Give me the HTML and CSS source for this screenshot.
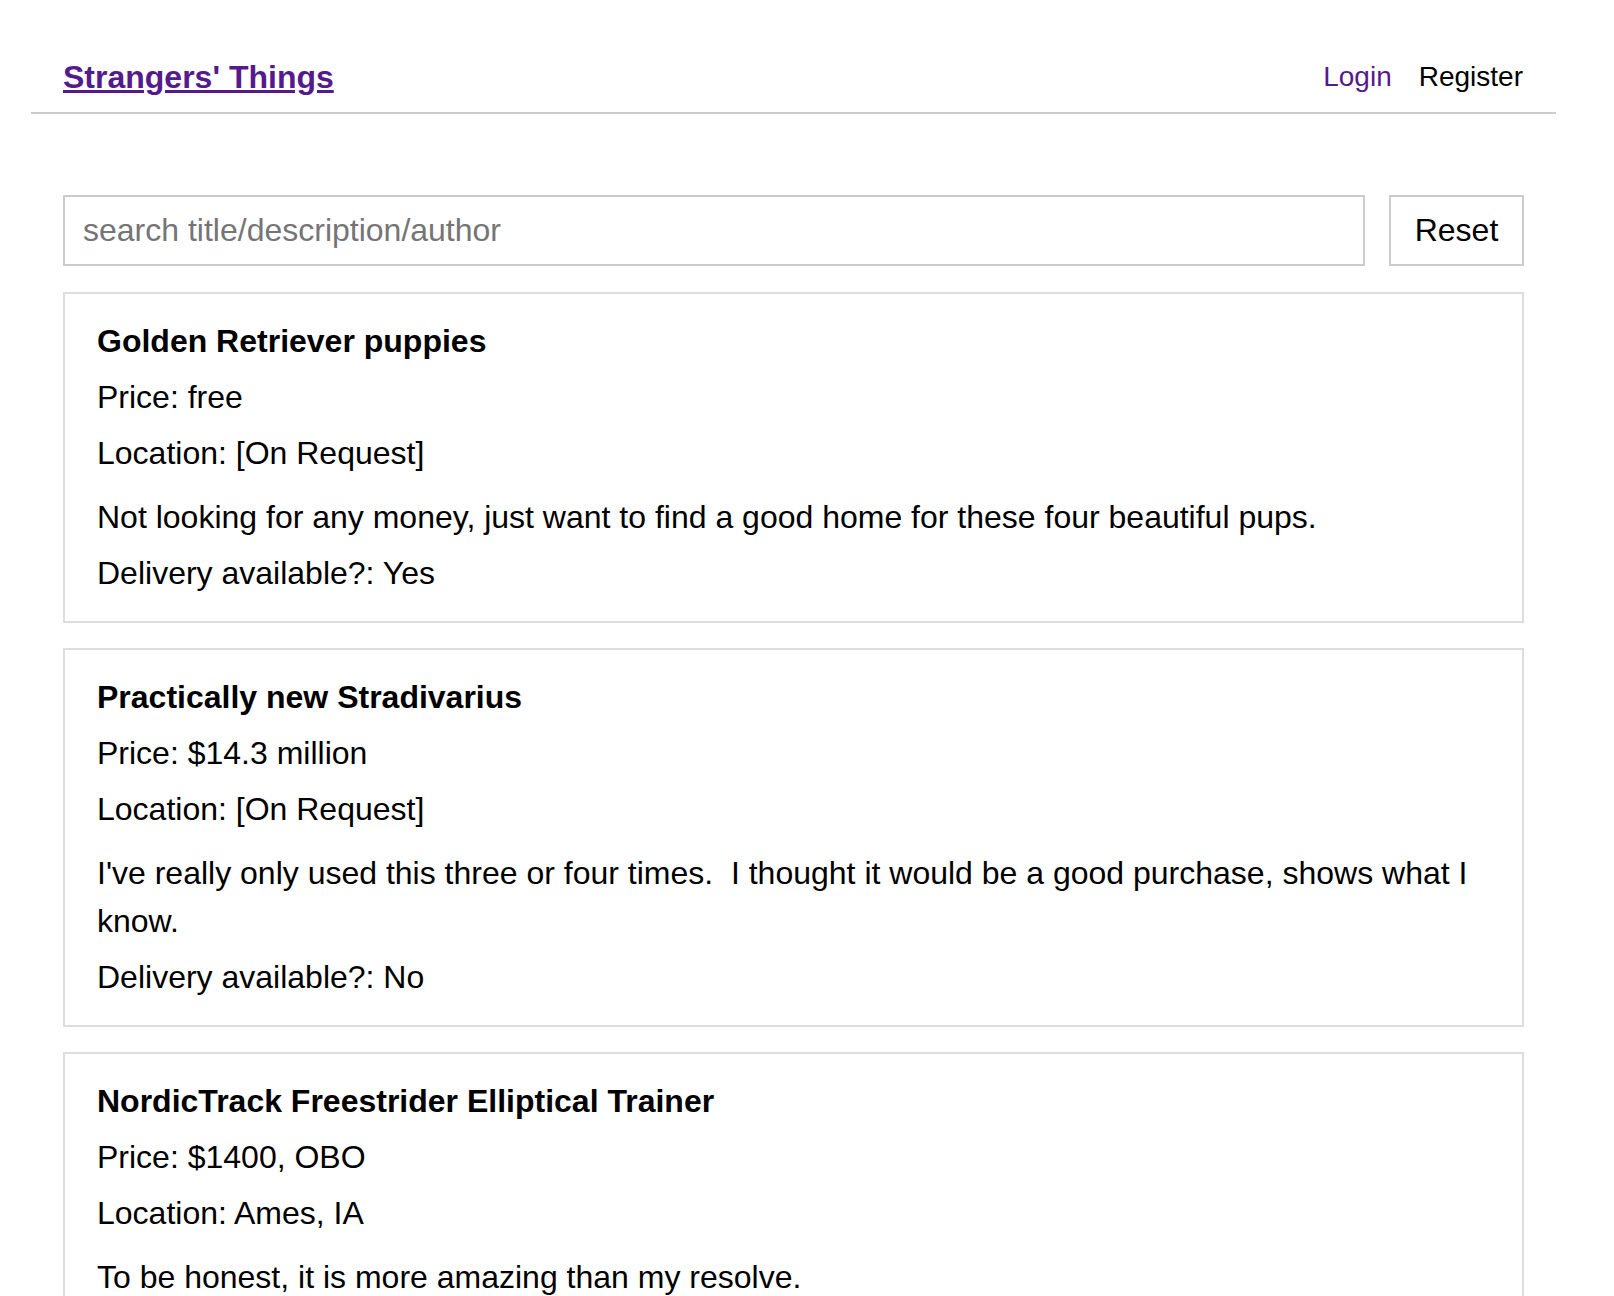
FILE: index.html
```html
<!DOCTYPE html>
<html lang="en">
<head>
<meta charset="utf-8">
<title>Strangers' Things</title>
<link rel="stylesheet" href="styles.css">
</head>
<body>
<header class="site-header">
  <a class="brand" href="#">Strangers' Things</a>
  <nav class="nav">
    <a class="nav-link nav-link--visited" href="#">Login</a>
    <a class="nav-link" href="#">Register</a>
  </nav>
</header>
<main class="main">
  <form class="search">
    <input class="search-input" type="text" placeholder="search title/description/author">
    <button class="reset" type="button">Reset</button>
  </form>
  <section class="posts">
    <article class="post">
      <div class="post-title">Golden Retriever puppies</div>
      <div class="post-line">Price: free</div>
      <div class="post-line">Location: [On Request]</div>
      <p class="post-desc">Not looking for any money, just want to find a good home for these four beautiful pups.</p>
      <div class="post-line">Delivery available?: Yes</div>
    </article>
    <article class="post">
      <div class="post-title">Practically new Stradivarius</div>
      <div class="post-line">Price: $14.3 million</div>
      <div class="post-line">Location: [On Request]</div>
      <p class="post-desc">I've really only used this three or four times.&nbsp; I thought it would be a good purchase, shows what I know.</p>
      <div class="post-line">Delivery available?: No</div>
    </article>
    <article class="post">
      <div class="post-title">NordicTrack Freestrider Elliptical Trainer</div>
      <div class="post-line">Price: $1400, OBO</div>
      <div class="post-line">Location: Ames, IA</div>
      <p class="post-desc">To be honest, it is more amazing than my resolve.</p>
      <div class="post-line">Delivery available?: No</div>
    </article>
  </section>
</main>
</body>
</html>
```

FILE: styles.css
```css
html, body {
  background: #fff;
}

body {
  margin: 0;
  font-family: "Liberation Sans", Arial, Helvetica, sans-serif;
  font-size: 32px;
  color: #000;
}

.site-header {
  margin: 0 58px 0 31px;
  padding: 53px 33px 11px 32px;
  border-bottom: 2px solid #cccccc;
  display: flex;
  justify-content: space-between;
  align-items: center;
  line-height: 48px;
}

.brand {
  font-size: 32px;
  font-weight: bold;
  color: #551a8b;
  text-decoration: underline;
}

.nav {
  display: flex;
  gap: 27px;
  font-size: 28px;
}

.nav-link {
  color: #000;
  text-decoration: none;
}

.nav-link--visited {
  color: #551a8b;
}

.main {
  padding: 81px 90px 40px 63px;
}

.search {
  display: flex;
  gap: 24px;
  margin: 0 0 26px 0;
}

.search-input {
  flex: 1;
  min-width: 0;
  height: 71px;
  box-sizing: border-box;
  border: 2px solid #cccccc;
  border-radius: 0;
  padding: 0 18px;
  font-family: inherit;
  font-size: 32px;
  color: #000;
  background: #fff;
  outline: none;
}

.search-input::placeholder {
  color: #757575;
}

.reset {
  width: 135px;
  height: 71px;
  box-sizing: border-box;
  border: 2px solid #cccccc;
  border-radius: 0;
  background: #fff;
  color: #000;
  padding: 0;
  font-family: inherit;
  font-size: 32px;
}

.posts {
  display: flex;
  flex-direction: column;
  gap: 25px;
}

.post {
  border: 2px solid #dddddd;
  padding: 23px 32px 24px 32px;
  display: flex;
  flex-direction: column;
  gap: 8px;
  line-height: 48px;
}

.post-title {
  font-weight: bold;
}

.post-line {
  margin: 0;
}

.post-desc {
  margin: 8px 0 0 0;
}
```
